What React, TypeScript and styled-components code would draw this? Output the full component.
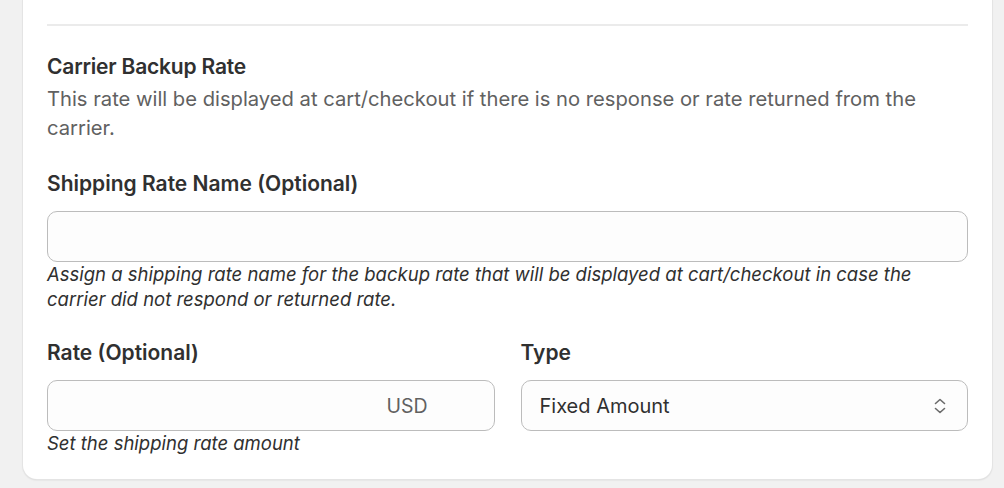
import React from 'react'
import styled, { createGlobalStyle } from 'styled-components'

const GlobalStyle = createGlobalStyle`
  html, body {
    margin: 0;
    padding: 0;
    background: #f1f1f1;
    font-family: Inter, "Noto Sans", sans-serif;
    color: #303030;
  }
`

const App = () => {
  return (
    <>
      <GlobalStyle />
      <Page>
        <Card>
          <Divider />
          <Section>
            <Heading>Carrier Backup Rate</Heading>
            <Description>
              This rate will be displayed at cart/checkout if there is no response or rate returned from the
              carrier.
            </Description>
          </Section>

          <Field>
            <Label>Shipping Rate Name (Optional)</Label>
            <Input />
            <Help>
              Assign a shipping rate name for the backup rate that will be displayed at cart/checkout in case the
              carrier did not respond or returned rate.
            </Help>
          </Field>

          <Row>
            <Field>
              <Label>Rate (Optional)</Label>
              <Input>
                <Suffix>USD</Suffix>
              </Input>
              <Help>Set the shipping rate amount</Help>
            </Field>
            <Field>
              <Label>Type</Label>
              <Select>
                <span>Fixed Amount</span>
                <svg width="14" height="20" viewBox="0 0 14 20" fill="none">
                  <path d="M2.5 7.5 L7 3.5 L11.5 7.5" stroke="#6b6b6b" strokeWidth="1.6" strokeLinecap="round" strokeLinejoin="round" />
                  <path d="M2.5 12.5 L7 16.5 L11.5 12.5" stroke="#6b6b6b" strokeWidth="1.6" strokeLinecap="round" strokeLinejoin="round" />
                </svg>
              </Select>
            </Field>
          </Row>
        </Card>
      </Page>
    </>
  )
}

export default App

const Page = styled.div`
  width: 1004px;
  height: 488px;
  overflow: hidden;
`

const Card = styled.div`
  margin-left: 23px;
  width: 969px;
  box-sizing: border-box;
  padding: 24px 24px 23px;
  background: #ffffff;
  border-radius: 0 0 14px 14px;
  box-shadow: 0 0 0 1px #e4e4e4, 0 1px 2px rgba(0, 0, 0, 0.14);
`

const Divider = styled.div`
  height: 2px;
  background: #ebebeb;
  margin-bottom: 28px;
`

const Section = styled.div`
  margin-bottom: 29px;
`

const Heading = styled.h3`
  margin: 0;
  font-size: 21px;
  font-weight: 600;
  line-height: 26px;
  letter-spacing: -0.2px;
`

const Description = styled.p`
  margin: 4px 0 0;
  font-size: 20.2px;
  line-height: 29px;
  color: #616161;
`

const Field = styled.div`
  display: flex;
  flex-direction: column;
  min-width: 0;
  margin-bottom: 28px;
`

const Row = styled.div`
  display: grid;
  grid-template-columns: 1fr 1fr;
  column-gap: 26px;

  ${Field} {
    margin-bottom: 0;
  }
`

const Label = styled.div`
  font-size: 21px;
  font-weight: 600;
  line-height: 26px;
  margin-bottom: 14px;
`

const Input = styled.div`
  height: 51px;
  box-sizing: border-box;
  border: 1px solid #bcbcbc;
  border-radius: 10px;
  background: #fdfdfd;
  display: flex;
  align-items: center;
  justify-content: flex-end;
  padding: 0 66px 0 18px;
`

const Suffix = styled.span`
  font-size: 19.5px;
  color: #616161;
`

const Select = styled(Input)`
  justify-content: space-between;
  padding: 0 20px 0 18px;
  font-size: 20px;
  color: #303030;
`

const Help = styled.div`
  font-size: 18.5px;
  font-style: italic;
  line-height: 25px;
  color: #303030;
`
